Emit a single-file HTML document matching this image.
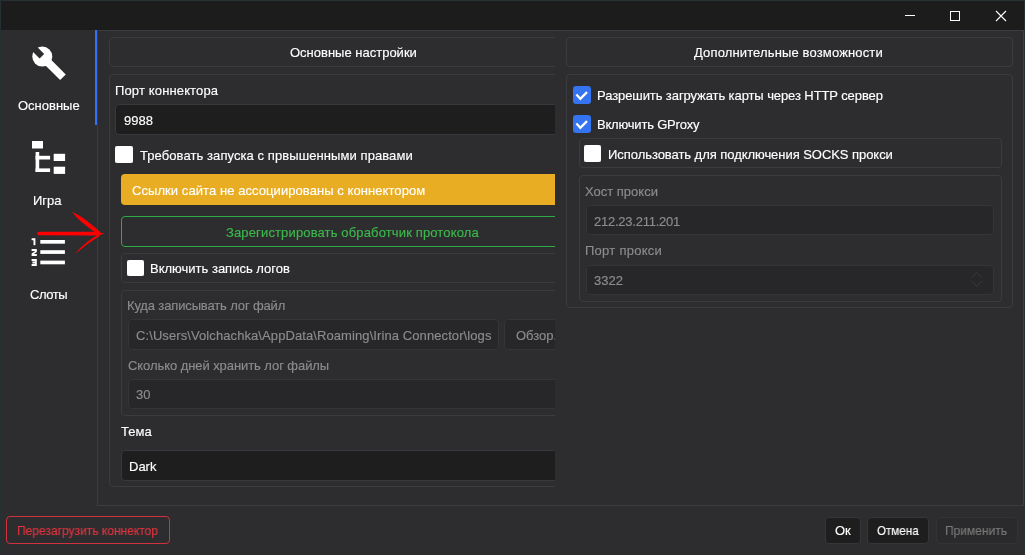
<!DOCTYPE html>
<html><head><meta charset="utf-8">
<style>
*{box-sizing:border-box;margin:0;padding:0}
html,body{width:1025px;height:555px;overflow:hidden;background:#2d2d30;font-family:"Liberation Sans",sans-serif;font-size:13px;line-height:15px;color:#fff}
.a{position:absolute}
.t{position:absolute;white-space:pre;will-change:transform;-webkit-text-stroke:0.15px currentColor}
.box{position:absolute;border:1px solid #3c3c40;border-radius:4px}
.inp{position:absolute;background:#1e1e1e;border:1px solid #38383c;border-radius:4px}
.dinp{position:absolute;background:#272729;border:1px solid #353539;border-radius:4px}
.dis{color:#8c8c8c}
.cb{position:absolute;width:18px;height:17px;background:#6c6c6e}.cb::after{content:"";position:absolute;left:0;top:0;right:0;bottom:0;background:#fff;border-radius:2.5px}
.cbb{position:absolute;width:18px;height:18px;background:#3574f0;border-radius:3px}
</style></head><body>
<!-- window border -->
<div class="a" style="left:0;top:0;width:1025px;height:1px;background:#273133"></div>
<div class="a" style="left:0;top:0;width:1px;height:555px;background:#253032;z-index:5"></div>
<div class="a" style="left:1024px;top:0;width:1px;height:555px;background:#253032;z-index:5"></div>
<!-- title bar -->
<div class="a" style="left:1px;top:1px;width:1023px;height:29px;background:#1c1c1c"></div>
<div class="a" style="left:905px;top:15px;width:10px;height:1px;background:#fff"></div>
<div class="a" style="left:950px;top:11px;width:10px;height:10px;border:1px solid #fff"></div>
<svg class="a" style="left:995px;top:10px" width="12" height="12" viewBox="0 0 12 12"><path d="M1 1L11 11M11 1L1 11" stroke="#fff" stroke-width="1.1"/></svg>

<!-- sidebar indicator -->
<div class="a" style="left:95px;top:30px;width:2px;height:95px;background:#3271f7"></div>
<!-- frame -->
<div class="a" style="left:97px;top:30px;width:927px;height:476px;border:1px solid #3c3c40;border-right-color:#3e3e43"></div>

<!-- sidebar icons -->
<svg class="a" style="left:0;top:0" width="120" height="320" viewBox="0 0 120 320">
  <g transform="translate(42.3,56.6) rotate(45)" fill="#fff">
    <rect x="0" y="-4" width="29.2" height="8"/>
    <circle cx="0" cy="0" r="10"/>
    <rect x="-12" y="-3.2" width="11.4" height="6.4" fill="#2d2d30"/>
  </g>
  <g fill="#fff">
    <rect x="32" y="141" width="11" height="7.5"/>
    <rect x="35.6" y="152" width="3.6" height="20"/>
    <rect x="35.6" y="155.8" width="14.5" height="3.7"/>
    <rect x="35.6" y="168.4" width="14.5" height="3.6"/>
    <rect x="53.7" y="153.8" width="11.4" height="7.2"/>
    <rect x="53.7" y="166.7" width="11.4" height="7.2"/>
    <rect x="40.3" y="240" width="24.6" height="3.7"/>
    <rect x="40.3" y="250.2" width="24.6" height="3.7"/>
    <rect x="40.3" y="260.6" width="24.6" height="3.7"/>
    <rect x="31.6" y="238.3" width="3" height="1.9"/>
    <rect x="33.5" y="238.3" width="1.9" height="6.9"/>
    <path d="M31.6 249H36.8V252L33.9 254H36.8V255.9H31.6V253.6L34.9 251.3V250.9H31.6Z"/>
    <path d="M31.6 259.1H36.8V266H31.6V264.1H34.9V263.4H32.4V261.6H34.9V261H31.6Z"/>
  </g>
  <g fill="#ff0000">
    <path d="M39 231.7L97 231.8L104.5 233.7L97 235.5L39 235.3A1.8 1.8 0 0 1 39 231.7Z"/>
    <path d="M72 212C79 214.5 92 224 101 233L98.5 234.6C90 228.5 80 222 72 212Z"/>
    <path d="M100.3 233.6Q85.5 241.3 75 253.9Q86.8 243.6 99.6 235.9Z"/>
  </g>
</svg>
<div class="t" style="left:18px;top:98px">Основные</div>
<div class="t" style="left:33px;top:193px">Игра</div>
<div class="t" style="left:30px;top:287px;letter-spacing:-0.45px">Слоты</div>

<!-- LEFT PANEL (clipped at 556) -->
<div class="a" style="left:0;top:0;width:555px;height:555px;overflow:hidden">
  <div class="box" style="left:109px;top:37px;width:490px;height:30px"></div>
  <div class="t" style="left:290px;top:45px">Основные настройки</div>
  <div class="box" style="left:109px;top:74px;width:490px;height:413px"></div>
  <div class="t" style="left:115px;top:83px;letter-spacing:0.14px">Порт коннектора</div>
  <div class="inp" style="left:115px;top:104px;width:470px;height:31px"></div>
  <div class="t" style="left:124px;top:113px">9988</div>
  <div class="cb" style="left:115px;top:146px"></div>
  <div class="t" style="left:140px;top:148px;letter-spacing:0.08px">Требовать запуска с првышенными правами</div>
  <div class="a" style="left:121px;top:174px;width:465px;height:31px;background:#e8ad22;border-radius:4px"></div>
  <div class="t" style="left:132px;top:183px;letter-spacing:0.07px">Ссылки сайта не ассоциированы с коннектором</div>
  <div class="a" style="left:121px;top:216px;width:465px;height:31px;border:1.5px solid #2eaa46;border-radius:4px"></div>
  <div class="t" style="left:226px;top:225px;color:#3cb84c;letter-spacing:0.14px">Зарегистрировать обработчик протокола</div>
  <div class="box" style="left:121px;top:253px;width:465px;height:30px"></div>
  <div class="cb" style="left:127px;top:260px;width:17px;height:16px"></div>
  <div class="t" style="left:150px;top:261px">Включить запись логов</div>
  <div class="box" style="left:121px;top:290px;width:465px;height:126px"></div>
  <div class="t dis" style="left:127px;top:298px;letter-spacing:-0.14px">Куда записывать лог файл</div>
  <div class="dinp" style="left:128px;top:319px;width:371px;height:31px"></div>
  <div class="t dis" style="left:136px;top:328px;letter-spacing:0.09px">C:\Users\Volchachka\AppData\Roaming\Irina Connector\logs</div>
  <div class="dinp" style="left:504px;top:319px;width:80px;height:31px"></div>
  <div class="t dis" style="left:516px;top:328px">Обзор...</div>
  <div class="t dis" style="left:128px;top:358px;letter-spacing:-0.07px">Сколько дней хранить лог файлы</div>
  <div class="dinp" style="left:128px;top:379px;width:460px;height:30px"></div>
  <div class="t dis" style="left:136px;top:387px">30</div>
  <div class="t" style="left:121px;top:424px">Тема</div>
  <div class="inp" style="left:121px;top:450px;width:465px;height:31px"></div>
  <div class="t" style="left:129px;top:459px">Dark</div>
</div>

<!-- RIGHT PANEL -->
<div class="box" style="left:566px;top:37px;width:447px;height:30px"></div>
<div class="t" style="left:694px;top:45px;letter-spacing:0.14px">Дополнительные возможности</div>
<div class="box" style="left:566px;top:74px;width:447px;height:234px"></div>
<div class="cbb" style="left:573px;top:86px"></div><svg class="a" style="left:573px;top:86px" width="18" height="18"><path d="M3.4 8.6L7.3 12.8L14 6.1" fill="none" stroke="#fff" stroke-width="2.2"/></svg>
<div class="t" style="left:597px;top:88px;letter-spacing:-0.09px">Разрешить загружать карты через HTTP сервер</div>
<div class="cbb" style="left:573px;top:115px"></div><svg class="a" style="left:573px;top:115px" width="18" height="18"><path d="M3.4 8.6L7.3 12.8L14 6.1" fill="none" stroke="#fff" stroke-width="2.2"/></svg>
<div class="t" style="left:597px;top:117px;letter-spacing:-0.20px">Включить GProxy</div>
<div class="box" style="left:579px;top:138px;width:423px;height:30px"></div>
<div class="cb" style="left:584px;top:145px;width:17px;height:17px"></div>
<div class="t" style="left:608px;top:147px;letter-spacing:-0.05px">Использовать для подключения SOCKS прокси</div>
<div class="box" style="left:579px;top:175px;width:423px;height:127px"></div>
<div class="t dis" style="left:585px;top:184px">Хост прокси</div>
<div class="dinp" style="left:586px;top:205px;width:408px;height:30px"></div>
<div class="t dis" style="left:594px;top:214px;letter-spacing:-0.24px">212.23.211.201</div>
<div class="t dis" style="left:585px;top:243px;letter-spacing:0.27px">Порт прокси</div>
<div class="dinp" style="left:586px;top:265px;width:408px;height:30px"></div>
<div class="t dis" style="left:594px;top:273px">3322</div>
<svg class="a" style="left:0;top:0" width="1025" height="555"><path d="M971.5 277.5L976.7 272.5L982 277.5M971.5 281L976.7 286.2L982 281" fill="none" stroke="#3b3b3f" stroke-width="1"/></svg>

<!-- bottom buttons -->
<div class="a" style="left:6px;top:516px;width:164px;height:28px;border:1px solid #d0323e;border-radius:4px"></div>
<div class="t" style="left:17px;top:523px;color:#e0343f;transform:scaleX(0.924);transform-origin:0 0">Перезагрузить коннектор</div>
<div class="a" style="left:825px;top:517px;width:36px;height:27px;background:#1e1e1e;border:1px solid #36363a;border-radius:4px"></div>
<div class="t" style="left:835px;top:523px">Ок</div>
<div class="a" style="left:867px;top:517px;width:62px;height:27px;background:#1e1e1e;border:1px solid #36363a;border-radius:4px"></div>
<div class="t" style="left:877px;top:523px;transform:scaleX(0.893);transform-origin:0 0">Отмена</div>
<div class="a" style="left:936px;top:517px;width:82px;height:27px;background:#2a2a2c;border:1px solid #333336;border-radius:4px"></div>
<div class="t" style="left:945px;top:523px;color:#7a7a7a;transform:scaleX(0.923);transform-origin:0 0">Применить</div>
</body></html>
